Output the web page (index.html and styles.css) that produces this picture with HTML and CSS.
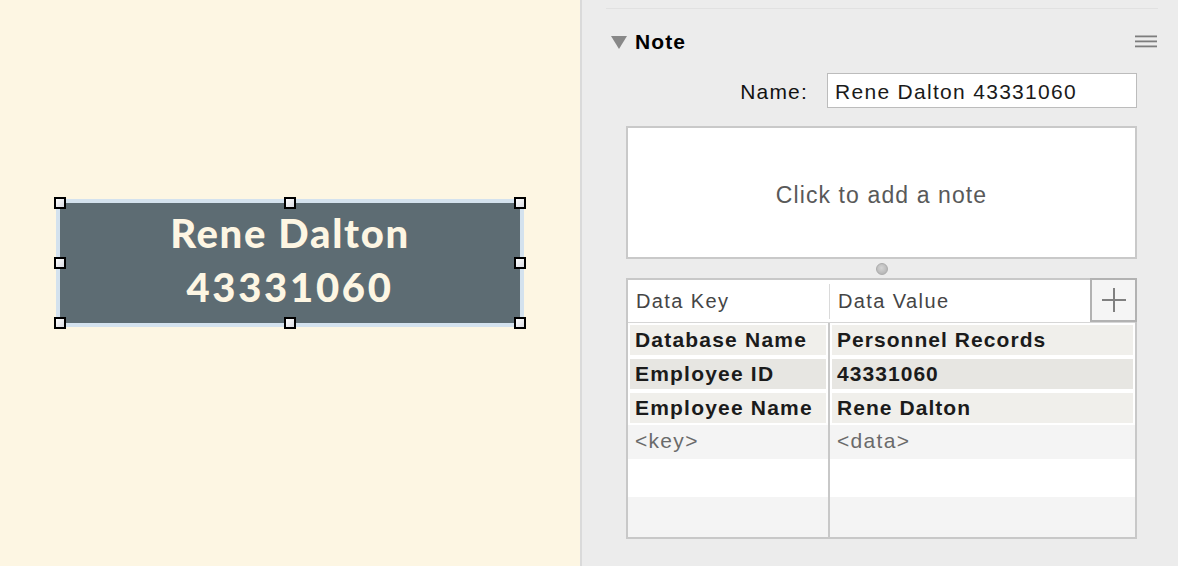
FILE: index.html
```html
<!DOCTYPE html>
<html lang="en">
<head>
<meta charset="utf-8">
<title>Note inspector</title>
<link rel="stylesheet" href="styles.css">
</head>
<body>
<div class="app">
  <main class="canvas">
    <div class="shape">
      <div class="shape-text">
        <div class="shape-line">Rene Dalton</div>
        <div class="shape-line shape-num">43331060</div>
      </div>
      <span class="handle h-tl"></span>
      <span class="handle h-tc"></span>
      <span class="handle h-tr"></span>
      <span class="handle h-ml"></span>
      <span class="handle h-mr"></span>
      <span class="handle h-bl"></span>
      <span class="handle h-bc"></span>
      <span class="handle h-br"></span>
    </div>
  </main>
  <aside class="inspector">
    <div class="rule"></div>
    <div class="section-head">
      <span class="disclosure"></span>
      <span class="section-title">Note</span>
      <svg class="menu-icon" width="22" height="13" viewBox="0 0 22 13">
        <rect x="0" y="0.5" width="22" height="1.8" fill="#7d7d7d"/>
        <rect x="0" y="5.5" width="22" height="1.8" fill="#7d7d7d"/>
        <rect x="0" y="10.5" width="22" height="1.8" fill="#7d7d7d"/>
      </svg>
    </div>
    <div class="section-body">
      <div class="name-row">
        <span class="name-label">Name:</span>
        <div class="name-field">Rene Dalton 43331060</div>
      </div>
      <div class="note-box">Click to add a note</div>
      <div class="grip-row"><span class="grip"></span></div>
      <div class="data-table">
        <div class="thead">
          <div class="th th-key">Data Key</div>
          <span class="th-div"></span>
          <div class="th th-val">Data Value</div>
          <div class="add-btn">
            <svg width="24" height="24" viewBox="0 0 24 24">
              <rect x="11" y="0" width="2" height="24" fill="#808080"/>
              <rect x="0" y="11" width="24" height="2" fill="#808080"/>
            </svg>
          </div>
        </div>
        <div class="tbody">
          <div class="td key row-a"><div class="fill">Database Name</div></div>
          <div class="td val row-a"><div class="fill">Personnel Records</div></div>
          <div class="td key row-b"><div class="fill">Employee ID</div></div>
          <div class="td val row-b"><div class="fill">43331060</div></div>
          <div class="td key row-a"><div class="fill">Employee Name</div></div>
          <div class="td val row-a"><div class="fill">Rene Dalton</div></div>
          <div class="td key placeholder"><div class="fill">&lt;key&gt;</div></div>
          <div class="td val placeholder"><div class="fill">&lt;data&gt;</div></div>
          <div class="td key empty-white"></div>
          <div class="td val empty-white"></div>
          <div class="td key empty-gray"></div>
          <div class="td val empty-gray"></div>
        </div>
      </div>
    </div>
  </aside>
</div>
</body>
</html>
```
FILE: styles.css
```css
* { box-sizing: border-box; }

html, body {
  margin: 0;
  padding: 0;
  width: 1178px;
  height: 566px;
  overflow: hidden;
}

body {
  font-family: "Liberation Sans", Arial, sans-serif;
  background: #ececec;
}

.app {
  display: flex;
  height: 566px;
}

/* ---------- canvas ---------- */
.canvas {
  width: 582px;
  flex: none;
  background: #fdf6e3;
  border-right: 2px solid #dadada;
  display: flex;
  flex-direction: column;
  align-items: center;
  padding-top: 203px;
}

.shape {
  position: relative;
  width: 460px;
  height: 120px;
  background: #5d6c73;
  box-shadow: 0 0 0 4px #d4e2ee;
  display: flex;
  align-items: center;
  justify-content: center;
  padding-bottom: 7px;
}

.shape-text {
  font-family: Lato, "Liberation Sans", sans-serif;
  font-weight: 900;
  font-size: 40px;
  line-height: 54px;
  text-align: center;
  color: #fdf6e3;
}

.shape-line {
  letter-spacing: 1.7px;
}

.shape-num {
  letter-spacing: 2.7px;
}

.handle {
  position: absolute;
  width: 12px;
  height: 12px;
  border: 2px solid #000;
  background: linear-gradient(135deg, #ffffff 0%, #d9dbe2 100%);
}
.h-tl { left: -6px; top: -6px; }
.h-tc { left: 224px; top: -6px; }
.h-tr { right: -6px; top: -6px; }
.h-ml { left: -6px; top: 54px; }
.h-mr { right: -6px; top: 54px; }
.h-bl { left: -6px; bottom: -6px; }
.h-bc { left: 224px; bottom: -6px; }
.h-br { right: -6px; bottom: -6px; }

/* ---------- inspector ---------- */
.inspector {
  flex: 1;
  padding: 8px 20px 0 24px;
  display: flex;
  flex-direction: column;
}

.rule {
  height: 1px;
  background: #e1e1e1;
}

.section-head {
  display: flex;
  align-items: center;
  height: 26px;
  margin-top: 20px;
  padding-left: 5px;
}

.disclosure {
  width: 0;
  height: 0;
  border-left: 8px solid transparent;
  border-right: 8px solid transparent;
  border-top: 13px solid #888888;
  margin-right: 8px;
}

.section-title {
  font-weight: 700;
  font-size: 21px;
  line-height: 26px;
  letter-spacing: 1.1px;
  color: #000;
  flex: 1;
}

.menu-icon {
  display: block;
  margin-right: 1px;
  margin-top: -1px;
}

.section-body {
  padding: 0 21px 0 20px;
  display: flex;
  flex-direction: column;
}

.name-row {
  display: flex;
  align-items: center;
  justify-content: flex-end;
  gap: 19px;
  margin-top: 18px;
}

.name-label {
  font-size: 21px;
  letter-spacing: 1.2px;
  color: #111;
  padding-top: 3px;
}

.name-field {
  width: 310px;
  height: 35px;
  background: #fff;
  border: 1px solid #bcbcbc;
  font-size: 21px;
  letter-spacing: 1.3px;
  color: #1a1a1a;
  line-height: 31px;
  padding: 2px 0 0 7px;
  white-space: nowrap;
  overflow: hidden;
}

.note-box {
  margin-top: 18px;
  height: 133px;
  background: #fff;
  border: 2px solid #c9c9c9;
  display: flex;
  align-items: center;
  justify-content: center;
  font-size: 23px;
  line-height: 26px;
  letter-spacing: 1.1px;
  color: #595959;
  padding-top: 5px;
}

.grip-row {
  height: 19px;
  display: flex;
  align-items: center;
  justify-content: center;
}

.grip {
  width: 12px;
  height: 12px;
  border-radius: 50%;
  background: radial-gradient(circle at 45% 40%, #d4d4d4 0%, #b8b8b8 70%);
  border: 1px solid #ababab;
}

/* ---------- data table ---------- */
.data-table {
  height: 261px;
  border: 2px solid #c8c8c8;
  background: #fff;
  display: flex;
  flex-direction: column;
}

.thead {
  display: flex;
  align-items: center;
  height: 43px;
  border-bottom: 1px solid #d6d6d6;
  flex: none;
}

.th {
  font-size: 20px;
  letter-spacing: 1.4px;
  color: #454545;
  padding-top: 1px;
}

.th-key {
  width: 201px;
  padding-left: 8px;
}

.th-div {
  width: 1px;
  height: 35px;
  background: #dadada;
}

.th-val {
  flex: 1;
  padding-left: 8px;
}

.add-btn {
  align-self: flex-start;
  width: 47px;
  height: 44px;
  margin-top: -2px;
  margin-right: -2px;
  background: #f5f5f5;
  border: 2px solid #b2b2b2;
  display: flex;
  align-items: center;
  justify-content: center;
}

.tbody {
  flex: 1;
  display: grid;
  grid-template-columns: 202px 1fr;
  grid-template-rows: 34px 34px 34px 34px 38px 1fr;
}

.td {
  padding: 2px;
  display: flex;
}

.td.key {
  border-right: 2px solid #c8c8c8;
}

.fill {
  flex: 1;
  padding-left: 5px;
  font-size: 21px;
  line-height: 30px;
  letter-spacing: 1.2px;
  font-weight: 700;
  color: #1b1b1b;
  white-space: nowrap;
}

.td.val .fill {
  letter-spacing: 1.05px;
}

.row-a .fill { background: #f0efeb; }
.row-b .fill { background: #e7e6e2; }

.td.placeholder {
  background: #f4f4f4;
  padding: 0;
}
.td.placeholder .fill {
  font-weight: 400;
  font-size: 21px;
  letter-spacing: 1.3px;
  color: #6a6a6a;
  line-height: 32px;
  padding-left: 7px;
}

.empty-white { background: #fff; }
.empty-gray { background: #f4f4f4; }
```
